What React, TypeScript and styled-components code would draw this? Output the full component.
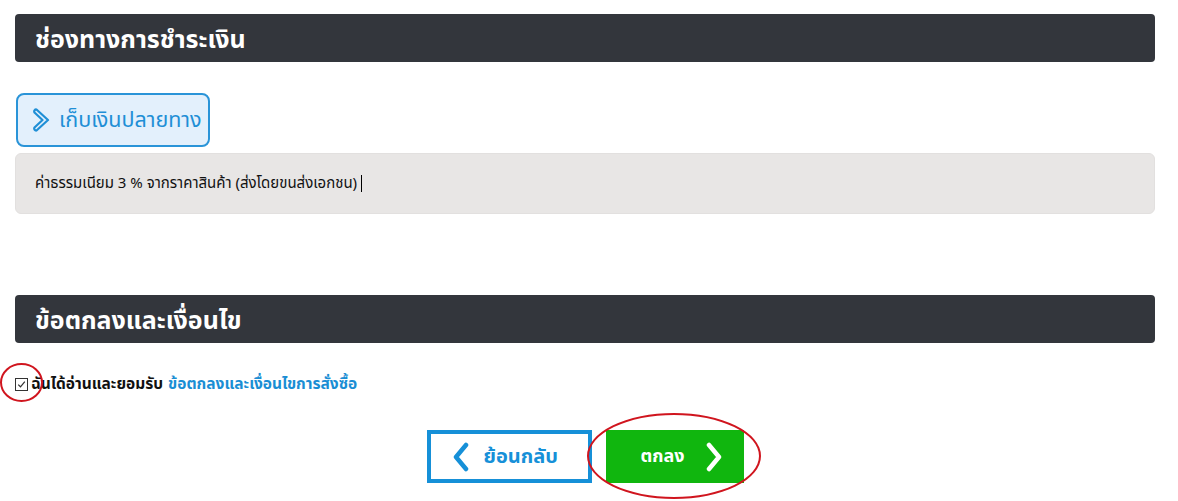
import React from "react";
import styled, { createGlobalStyle } from "styled-components";

const Global = createGlobalStyle`
  html, body { margin: 0; padding: 0; background: #ffffff; }
  body { font-family: Tahoma, "Noto Sans Thai", "Noto Sans", "DejaVu Sans", sans-serif; color: #222; }
`;

const Page = styled.div`
  width: 1140px;
  margin-left: 15px;
  padding-top: 14px;
  padding-bottom: 20px;
`;

const SectionHeader = styled.div<{ $mt?: number }>`
  height: 48px;
  margin-top: ${(p) => p.$mt ?? 0}px;
  background: #33363c;
  border-radius: 4px;
  color: #ffffff;
  font-size: 25px;
  font-weight: 700;
  display: flex;
  align-items: center;
  padding: 3px 0 0 20px;
  box-sizing: border-box;
  white-space: nowrap;
`;

const MethodButton = styled.button`
  margin-top: 31px;
  height: 54px;
  width: 194px;
  margin-left: 1px;
  border: 2px solid #2a94d8;
  border-radius: 8px;
  background: #e3f0fc;
  color: #1f8fd6;
  font-family: inherit;
  font-size: 21.5px;
  white-space: nowrap;
  display: flex;
  align-items: center;
  gap: 8px;
  padding: 0 0 0 15px;
  box-sizing: border-box;
  cursor: pointer;
`;

const InfoPanel = styled.div`
  margin-top: 6px;
  height: 61px;
  background: #e8e6e5;
  border-radius: 6px;
  border: 1px solid #e2e0df;
  box-sizing: border-box;
  display: flex;
  align-items: center;
  padding-left: 19px;
  font-size: 15px;
  color: #111;
  white-space: nowrap;
`;

const Caret = styled.span`
  display: inline-block;
  width: 1px;
  height: 17px;
  background: #000;
  margin-left: 4px;
`;

const AgreeRow = styled.div`
  position: relative;
  margin-top: 33px;
  display: flex;
  align-items: center;
  font-size: 15.5px;
  font-weight: 700;
  color: #111;
  height: 16px;
  white-space: nowrap;
`;

const Check = styled.span`
  width: 11px;
  height: 11px;
  border: 1px solid #333;
  margin-right: 3px;
  display: inline-flex;
  align-items: center;
  justify-content: center;
  background: #fff;
`;

const Link = styled.a`
  color: #1a8ed4;
  margin-left: 5px;
  text-decoration: none;
`;

const Circle = styled.span<{ $l: number; $t: number; $w: number; $h: number }>`
  position: absolute;
  left: ${(p) => p.$l}px;
  top: ${(p) => p.$t}px;
  width: ${(p) => p.$w}px;
  height: ${(p) => p.$h}px;
  border: 2.5px solid #d0151e;
  border-radius: 50%;
  box-sizing: border-box;
  pointer-events: none;
`;

const Actions = styled.div`
  margin-top: 38px;
  display: flex;
  justify-content: center;
  gap: 14px;
`;

const BackButton = styled.button`
  width: 165px;
  height: 53px;
  border: 4px solid #1690d8;
  background: #fff;
  color: #1690d8;
  font-family: inherit;
  font-size: 20px;
  font-weight: 700;
  white-space: nowrap;
  display: flex;
  align-items: center;
  gap: 14px;
  padding: 0 0 0 21px;
  box-sizing: border-box;
  cursor: pointer;
`;

const OkWrap = styled.div`
  position: relative;
`;

const OkButton = styled.button`
  width: 138px;
  height: 53px;
  border: none;
  background: #10b60e;
  color: #fff;
  font-family: inherit;
  font-size: 18px;
  font-weight: 700;
  white-space: nowrap;
  display: flex;
  align-items: center;
  gap: 20px;
  padding: 0 0 0 35px;
  box-sizing: border-box;
  cursor: pointer;
`;

const CheckIcon = () => (
  <svg width="9" height="9" viewBox="0 0 9 9">
    <path d="M1.2 4.6 L3.5 6.8 L7.8 1.6" fill="none" stroke="#333" strokeWidth="1.2" />
  </svg>
);

export default function App() {
  return (
    <>
      <Global />
      <Page>
        <SectionHeader>ช่องทางการชำระเงิน</SectionHeader>
        <MethodButton>
          <svg width="18" height="26" viewBox="0 0 18 26">
            <path d="M3.5 2.5 L15 13 L3.5 23.5 A2 2 0 0 1 1.5 20.5 L9.5 13 L1.5 5.5 A2 2 0 0 1 3.5 2.5 Z" fill="none" stroke="#1f8fd6" strokeWidth="2.2" strokeLinejoin="round" />
          </svg>
          เก็บเงินปลายทาง
        </MethodButton>
        <InfoPanel>
          ค่าธรรมเนียม 3 % จากราคาสินค้า (ส่งโดยขนส่งเอกชน)
          <Caret />
        </InfoPanel>
        <SectionHeader $mt={81}>ข้อตกลงและเงื่อนไข</SectionHeader>
        <AgreeRow>
          <Check>
            <CheckIcon />
          </Check>
          ฉันได้อ่านและยอมรับ
          <Link href="#">ข้อตกลงและเงื่อนไขการสั่งซื้อ</Link>
          <Circle $l={-15} $t={-13} $w={43} $h={39} />
        </AgreeRow>
        <Actions>
          <BackButton>
            <svg width="18" height="30" viewBox="0 0 18 30">
              <path d="M14 3 L4 15 L14 27" fill="none" stroke="#1690d8" strokeWidth="4.5" strokeLinecap="round" strokeLinejoin="round" />
            </svg>
            ย้อนกลับ
          </BackButton>
          <OkWrap>
            <OkButton>
              ตกลง
              <svg width="18" height="30" viewBox="0 0 18 30">
                <path d="M4 3 L14 15 L4 27" fill="none" stroke="#fff" strokeWidth="4.5" strokeLinecap="round" strokeLinejoin="round" />
              </svg>
            </OkButton>
            <Circle $l={-19} $t={-17} $w={174} $h={86} />
          </OkWrap>
        </Actions>
      </Page>
    </>
  );
}
